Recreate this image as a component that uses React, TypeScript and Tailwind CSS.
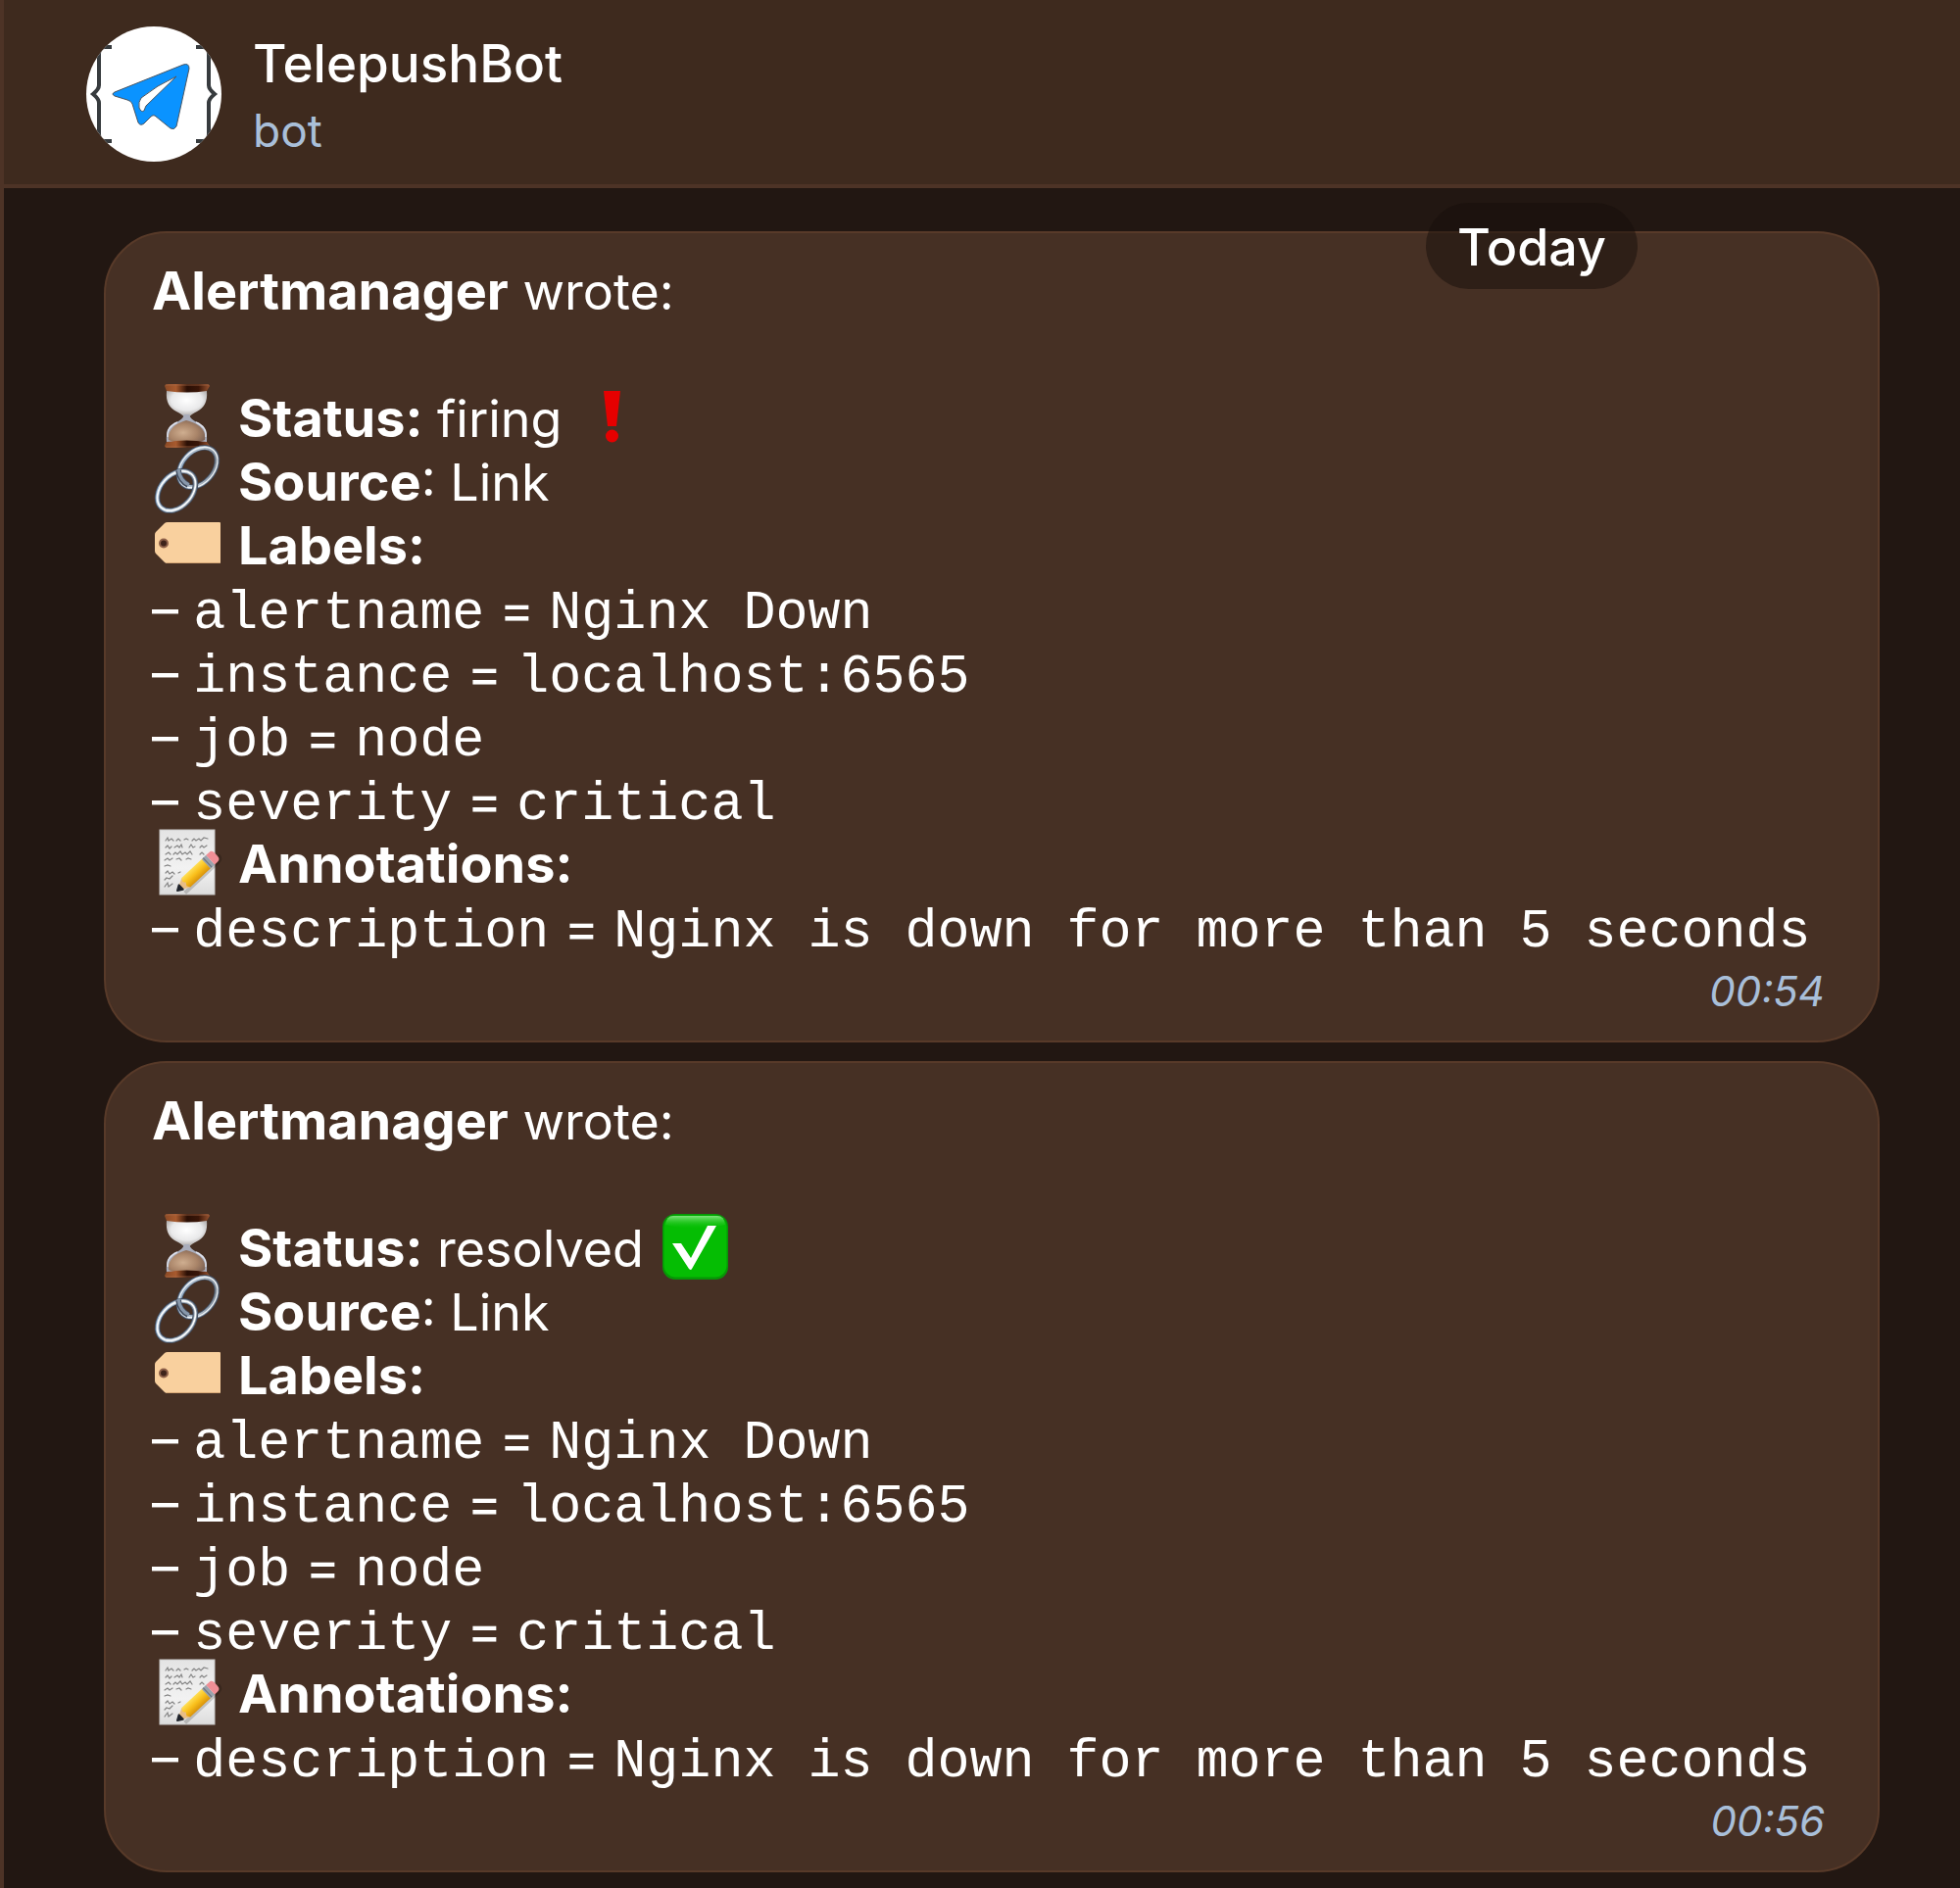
import type { ReactNode } from "react";

const EMOJI = "h-[65px] w-[72px] shrink-0 overflow-visible";

function Hourglass() {
  return (
    <svg viewBox="0 0 72 65" className={EMOJI} role="img" aria-label="hourglass">
      <defs>
        <linearGradient id="hg-cap" x1="0" x2="1">
          <stop offset="0" stopColor="#8a4a26" />
          <stop offset=".25" stopColor="#a85a2e" />
          <stop offset=".5" stopColor="#2a0f05" />
          <stop offset=".75" stopColor="#3a1608" />
          <stop offset="1" stopColor="#9a5430" />
        </linearGradient>
        <radialGradient id="hg-top" cx=".5" cy=".35" r=".7">
          <stop offset="0" stopColor="#ffffff" />
          <stop offset=".55" stopColor="#e9e9ea" />
          <stop offset="1" stopColor="#8f8a88" />
        </radialGradient>
        <radialGradient id="hg-sand" cx=".4" cy=".55" r=".65">
          <stop offset="0" stopColor="#cfae90" />
          <stop offset=".6" stopColor="#a98468" />
          <stop offset="1" stopColor="#7d6254" />
        </radialGradient>
      </defs>
      <path d="M15 5h41c1 12-3 17-10 21-4 2-7 4-8 6h-5c-1-2-4-4-8-6-7-4-11-9-10-21Z" fill="url(#hg-top)" />
      <path d="M33 29h5c1 4 4 6 8 8 7 4 11 9 10 20H15c-1-11 3-16 10-20 4-2 7-4 8-8Z" fill="#a9adbb" />
      <path d="M35 35c5 1 9 3 12 5 6 4 8 9 7 15-8 4-29 4-37 0-1-6 2-11 7-15 3-2 7-4 11-5Z" fill="url(#hg-sand)" />
      <path d="M16 52c-1-7 3-12 10-15M55 52c1-7-3-12-10-15" stroke="#dfe3ee" strokeWidth="1.4" fill="none" />
      <path d="M13 0q0-2 4-2h38q4 0 4 2l-3 5q-20 3-41 0Z" fill="url(#hg-cap)" />
      <path d="M15 57q20-3 41 0l3 4q0 2-4 2H17q-4 0-4-2Z" fill="url(#hg-cap)" />
      <path d="M14-1h44M14 62h44" stroke="#a86a48" strokeWidth="1" opacity=".7" />
    </svg>
  );
}

function Chain() {
  return (
    <svg viewBox="0 0 72 65" className={EMOJI} role="img" aria-label="link">
      <defs>
        <linearGradient id="chain-metal" x1="0" y1="0" x2="1" y2="1">
          <stop offset="0" stopColor="#8ba6c4" />
          <stop offset=".5" stopColor="#b9c6d2" />
          <stop offset="1" stopColor="#66717f" />
        </linearGradient>
      </defs>
      <g fill="none">
        <g transform="rotate(-48 47 18)">
          <ellipse cx="47" cy="18" rx="23" ry="16" stroke="#3f4a5c" strokeWidth="5.600" />
          <ellipse cx="47" cy="18" rx="23" ry="16" stroke="url(#chain-metal)" strokeWidth="3.800" />
          <ellipse cx="47" cy="18" rx="23.500" ry="16.500" stroke="#f1f5f8" strokeWidth="1.200" />
        </g>
        <g transform="rotate(-48 25 42)">
          <ellipse cx="25" cy="42" rx="23" ry="16" stroke="#3f4a5c" strokeWidth="5.600" />
          <ellipse cx="25" cy="42" rx="23" ry="16" stroke="url(#chain-metal)" strokeWidth="3.800" />
          <ellipse cx="25" cy="42" rx="23" ry="16" stroke="#f7fafc" strokeWidth="1.800" />
        </g>
        <path d="M27 21c1 7 4 12 10 15" stroke="#3f4a5c" strokeWidth="5.600" />
        <path d="M27 20c1 7 4 13 11 16" stroke="#8797aa" strokeWidth="3.400" />
      </g>
    </svg>
  );
}

function Tag() {
  return (
    <svg viewBox="0 0 72 65" className={EMOJI} role="img" aria-label="label">
      <path d="M16 9h53q1 0 1 1v40q0 1-1 1H16q-2 0-3-1L4 41q-1-1-1-3V22q0-2 1-3l9-9q1-1 3-1Z" fill="#f9d09e" />
      <path d="M15 50.500h54" stroke="#d7a877" strokeWidth="1" />
      <circle cx="12" cy="30.500" r="5" fill="#8e6049" />
      <circle cx="12" cy="30.500" r="3" fill="#3f241b" />
    </svg>
  );
}

function Memo() {
  return (
    <svg viewBox="0 0 72 65" className={EMOJI} role="img" aria-label="memo">
      <defs>
        <linearGradient id="memo-paper" x1="0" y1="0" x2="0" y2="1">
          <stop offset="0" stopColor="#e4e4e4" />
          <stop offset=".6" stopColor="#f2f2f2" />
          <stop offset="1" stopColor="#dcdcdc" />
        </linearGradient>
        <linearGradient id="memo-wood" x1="0" y1="0" x2="0" y2="1">
          <stop offset="0" stopColor="#ffdf55" />
          <stop offset=".5" stopColor="#f9bf1b" />
          <stop offset="1" stopColor="#d9930b" />
        </linearGradient>
      </defs>
      <rect x="8" y="-2" width="56" height="66" fill="url(#memo-paper)" stroke="#c9c9c9" strokeWidth="1" />
      <g fill="none" stroke="#858585" strokeWidth="1.200" strokeLinecap="round">
        <path d="M14 9l2-3 1 3 3-2 2 2M25 9l2-2 2 2M33 8l2-1 2 1M41 9l2-2 2 2 3-2 2 2 3-3 4 1" />
        <path d="M14 16l2-2 2 3 2-2M23 16l3-2 2 2 2-3 1 3M38 16l2-3 2 3 2-1M49 16l2-2 2 2 3-2" />
        <path d="M14 23l3-2 2 2M22 23l2-2 2 2 3-3 2 3 3-2 2 2 3-3 2 3M49 23l2-2 2 2" />
        <path d="M13 29l3-2 2 2 3-2M25 28l3-1 2 2M35 28l2-1 3 1" />
        <path d="M13 35l3-1 3 1M14 42l2-2 2 3 3-2 2 2M27 42l2-1" />
        <path d="M13 49l2-2 3 1 3-3M13 56l3-4 1 4 4-3" />
      </g>
      <g transform="translate(26 60) rotate(-43)">
        <path d="M4 7H50q5 0 5-5" fill="none" stroke="#000" strokeOpacity=".18" strokeWidth="4" />
        <path d="M0 0 12-6.500V6.500Z" fill="#e8bd86" />
        <path d="M0 0 5-3V3Z" fill="#20242c" stroke="#20242c" strokeWidth="2" strokeLinejoin="round" />
        <path d="M12-6.500H41V6.500H12L10 3 12 0 10-3Z" fill="url(#memo-wood)" />
        <path d="M40-6.500h6v13h-6Z" fill="#9aa3ad" />
        <path d="M42-6.500v13" stroke="#6c757f" strokeWidth="1.200" />
        <path d="M46-6.500h4q4 0 4 4v5q0 4-4 4h-4Z" fill="#f08f96" />
      </g>
    </svg>
  );
}

function Exclamation() {
  return (
    <svg viewBox="0 0 72 65" className={EMOJI} role="img" aria-label="exclamation mark">
      <path d="M27 5h17l-4 36h-9Z" fill="#e60000" />
      <circle cx="35.500" cy="51" r="6.500" fill="#e60000" />
    </svg>
  );
}

function CheckMark() {
  return (
    <svg viewBox="0 0 72 65" className={EMOJI} role="img" aria-label="check mark">
      <defs>
        <linearGradient id="ck-gloss" x1="0" y1="0" x2="0" y2="1">
          <stop offset="0" stopColor="#7fe37c" />
          <stop offset="1" stopColor="#0fc40b" stopOpacity="0" />
        </linearGradient>
      </defs>
      <rect x="3" y="-2" width="67" height="67" rx="13" fill="#079606" />
      <rect x="4.500" y="-.5" width="64" height="63" rx="12" fill="#05bd03" />
      <path d="M14 0h45q7 0 8 9-15 4-30 4T6 9q1-9 8-9Z" fill="url(#ck-gloss)" />
      <path d="M13 28h9l10 15L49 10h9L33 54q-1 2-3 0Z" fill="#fff" />
    </svg>
  );
}

function Avatar() {
  return (
    <svg viewBox="0 0 138 138" className="size-[138px] shrink-0" role="img" aria-label="TelepushBot avatar">
      <defs>
        <clipPath id="avatar-clip">
          <circle cx="69" cy="69" r="69" />
        </clipPath>
      </defs>
      <g clipPath="url(#avatar-clip)">
        <rect width="138" height="138" fill="#fff" />
        <g fill="none" stroke="#373b3e" strokeWidth="4">
          <path d="M26 21H19q-6 0-6 7V60q0 4-6 9 6 5 6 9v32q0 7 6 7h7" />
          <path d="M112 21h7q6 0 6 7V60q0 4 6 9-6 5-6 9v32q0 7-6 7h-7" />
        </g>
        <path
          d="M99 39q6-2 6 4L92 102q-2 4-6 2L70 91q-2-1-4 1l-7 7q-4 3-6-1l-6-19q-1-3-5-4L29 71q-4-2 0-4Z"
          fill="#0a93ff"
          stroke="#4a5560"
          strokeWidth="1"
        />
        <path
          d="M92 51 61 81q-1 2-2 5-3 2-5-3-1-6 2-10Q72 60 92 51Z"
          fill="#fff"
          stroke="#4a5560"
          strokeWidth="1"
        />
      </g>
    </svg>
  );
}

function Row({ children }: { children?: ReactNode }) {
  return <div className="flex h-[65px] items-center gap-4 whitespace-pre">{children}</div>;
}

function Label({ children }: { children: ReactNode }) {
  return <strong className="text-[54px] font-bold">{children}</strong>;
}

function Pair({ name, value }: { name: string; value: string }) {
  return (
    <li className="h-[65px] text-[54px] whitespace-pre">
      – <code className="font-['Liberation_Mono',monospace] text-[55px]">{name}</code> ={" "}
      <code className="font-['Liberation_Mono',monospace] text-[55px]">{value}</code>
    </li>
  );
}

type Alert = { status: string; icon: ReactNode; time: string };

function Message({ status, icon, time }: Alert) {
  return (
    <article className="rounded-[64px] border-2 border-[#583a29] bg-[#463024] pt-[26px] pr-[54px] pb-[18px] pl-[47px]">
      <Row>
        <p>
          <Label>Alertmanager</Label> wrote:
        </p>
      </Row>
      <Row />
      <Row>
        <Hourglass />
        <p>
          <Label>Status:</Label> {status}
        </p>
        {icon}
      </Row>
      <Row>
        <Chain />
        <p>
          <Label>Source</Label>: <a href="#source">Link</a>
        </p>
      </Row>
      <Row>
        <Tag />
        <Label>Labels:</Label>
      </Row>
      <ul>
        <Pair name="alertname" value="Nginx Down" />
        <Pair name="instance" value="localhost:6565" />
        <Pair name="job" value="node" />
        <Pair name="severity" value="critical" />
      </ul>
      <Row>
        <Memo />
        <Label>Annotations:</Label>
      </Row>
      <ul>
        <Pair name="description" value="Nginx is down for more than 5 seconds" />
      </ul>
      <time className="block text-right text-[42px] leading-[65px] text-[#a9bfd9] italic">{time}</time>
    </article>
  );
}

export default function App() {
  return (
    <div className="min-h-screen border-l-4 border-[#4d3326] bg-[#221712] font-['Inter',sans-serif] text-[52px] leading-[65px] text-white">
      <header className="flex items-center gap-8 border-b-4 border-[#4d3326] bg-[#3e2a1e] pt-[27px] pb-[23px] pl-[84px]">
        <Avatar />
        <div>
          <h1 className="text-[53px] leading-[74px] font-medium">TelepushBot</h1>
          <p className="text-[46px] leading-[62px] text-[#a9bfd9]">bot</p>
        </div>
      </header>
      <main className="relative flex flex-col gap-[19px] pt-11 pr-[82px] pb-4 pl-[102px]">
        <div className="absolute top-[15px] right-[329px] rounded-[44px] bg-[#160e0a]/50 px-8 pt-[13px] pb-2.5 font-medium">
          Today
        </div>
        <Message status="firing" icon={<Exclamation />} time="00:54" />
        <Message status="resolved" icon={<CheckMark />} time="00:56" />
      </main>
    </div>
  );
}
